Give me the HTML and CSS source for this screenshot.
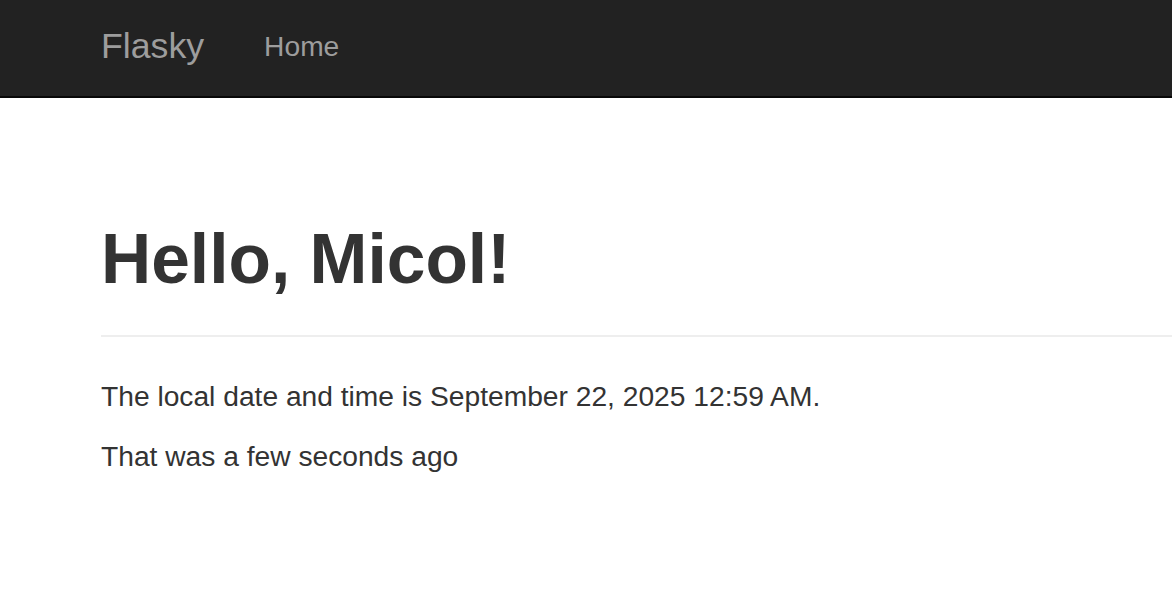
FILE: index.html
```html
<!DOCTYPE html>
<html lang="en">
<head>
<meta charset="utf-8">
<title>Flasky</title>
<link rel="stylesheet" href="styles.css">
</head>
<body>
<div class="navbar">
  <div class="nav-container">
    <a class="brand" href="#">Flasky</a>
    <ul class="nav">
      <li><a href="#">Home</a></li>
    </ul>
  </div>
</div>
<div class="container">
  <div class="page-header">
    <h1>Hello, Micol!</h1>
  </div>
  <p>The local date and time is September 22, 2025 12:59 AM.</p>
  <p>That was a few seconds ago</p>
</div>
</body>
</html>
```
FILE: styles.css
```css
html, body {
  margin: 0;
  padding: 0;
  background: #fff;
  font-family: "Liberation Sans", Arial, Helvetica, sans-serif;
  color: #333;
}
.navbar {
  height: 96px;
  background: #222;
  border-bottom: 2px solid #080808;
}
.nav-container {
  display: flex;
  align-items: flex-start;
  padding-left: 72px;
}
.brand {
  display: block;
  padding: 0 29px;
  font-size: 35.7px;
  line-height: 92px;
  color: #9d9d9d;
  text-decoration: none;
}
.nav {
  display: flex;
  list-style: none;
  margin: 0;
  padding: 0;
}
.nav a {
  display: block;
  padding: 0 29px 0 31px;
  font-size: 28.2px;
  line-height: 92px;
  color: #9d9d9d;
  text-decoration: none;
}
.container {
  padding-left: 101px;
}
.page-header {
  padding-bottom: 19px;
  border-bottom: 2px solid #eee;
  margin-bottom: 39px;
}
.page-header h1 {
  margin: 123px 0 19px;
  font-size: 69.5px;
  line-height: 76px;
  font-weight: bold;
  color: #333;
}
.container p {
  margin: 0 0 20px;
  font-size: 28.2px;
  line-height: 40px;
  color: #333;
}
```
